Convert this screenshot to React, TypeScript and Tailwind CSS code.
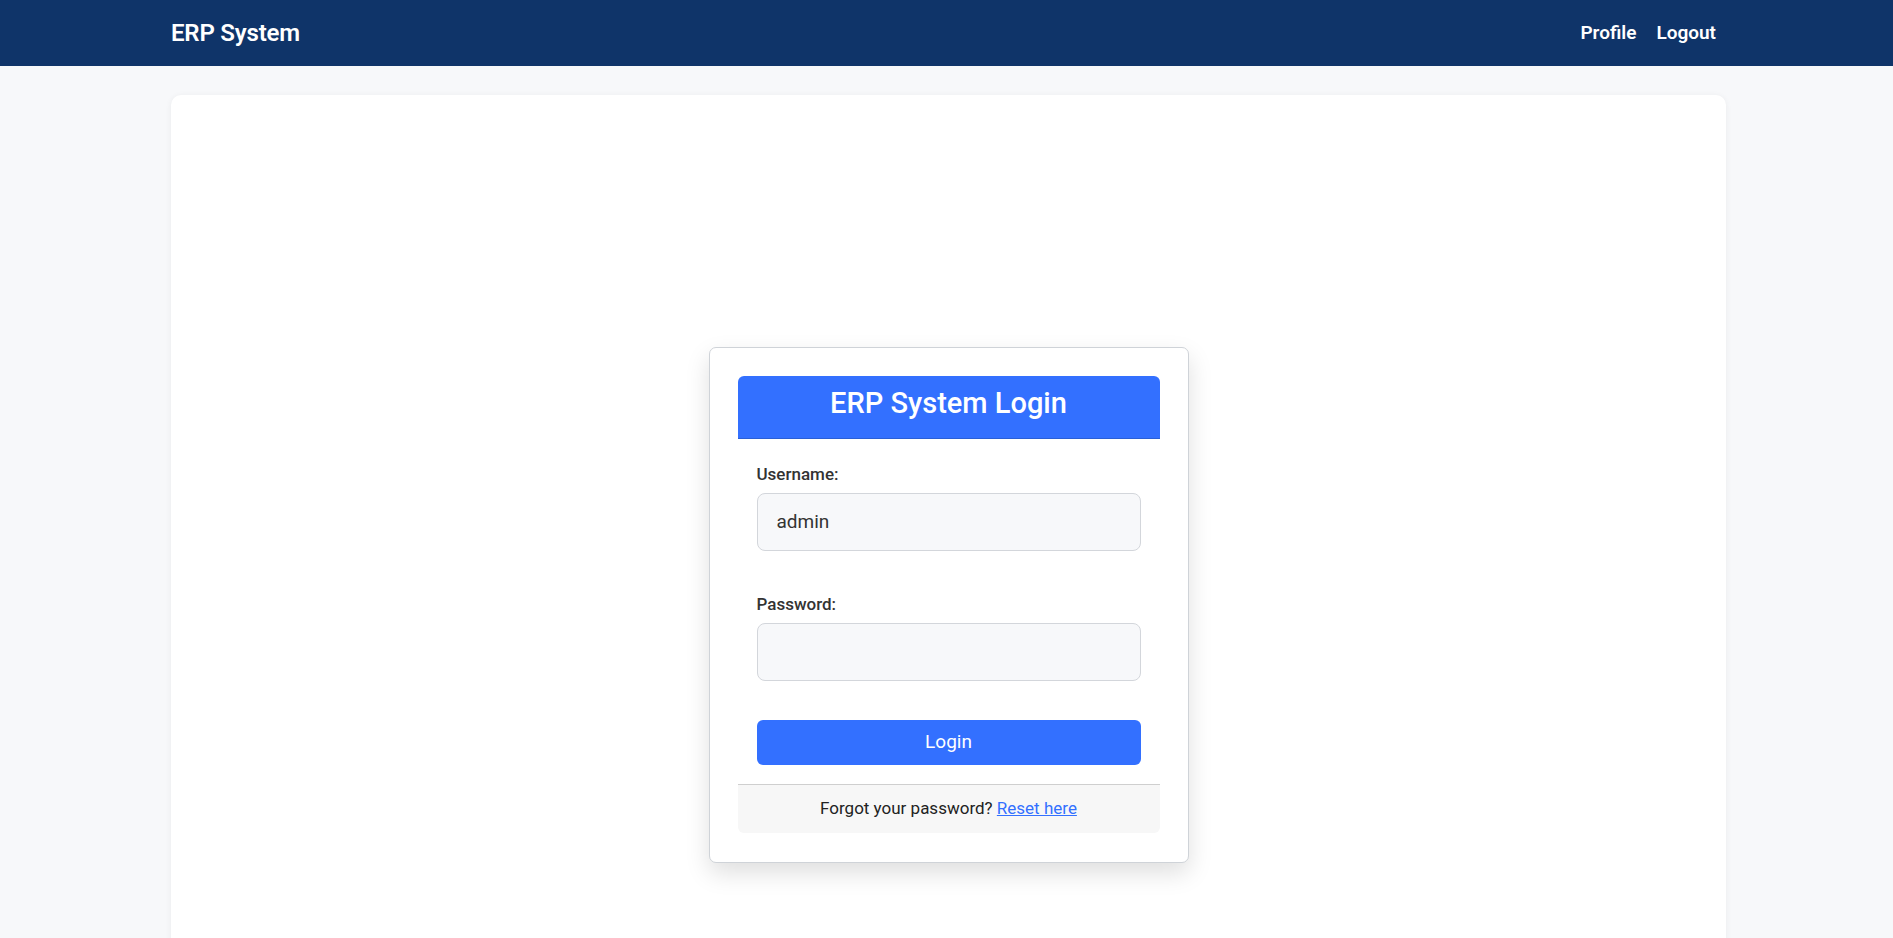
import { useState } from "react";

const NavBar = () => {
    return (
        <header className="bg-[#0f3469] h-[66px]">
            <div className="ml-[171px] w-[1555px] h-full flex items-center justify-between pr-[10px]">
                <span className="text-white text-[24px] font-semibold tracking-[-0.2px]">ERP System</span>
                <nav className="flex items-center gap-[20px] text-white text-[19px] font-semibold">
                    <a href="#">Profile</a>
                    <a href="#">Logout</a>
                </nav>
            </div>
        </header>
    );
};

const LoginBox = () => {
    const [username, setUsername] = useState("admin");
    const [password, setPassword] = useState("");

    return (
        <div className="w-[480px] bg-white border border-[#cfd3d8] rounded-[7px] shadow-[0_10px_24px_rgba(0,0,0,0.13)] p-[28px] pb-[29px]">
            <div className="h-[63px] bg-[#3370ff] border-b border-[#2a5fd6] rounded-t-[6px] flex items-center justify-center">
                <h1 className="text-white text-[29px] font-medium leading-none mb-[7px]">ERP System Login</h1>
            </div>
            <form className="px-[19px] pt-[23px]" onSubmit={(e) => e.preventDefault()}>
                <label className="block text-[17px] leading-[24px] font-medium text-[#333]">Username:</label>
                <input
                    className="mt-[7px] block w-full h-[58px] bg-[#f7f8fa] border border-[#d3d6db] rounded-[8px] px-[19px] text-[19px] text-[#333] outline-none"
                    value={username}
                    onChange={(e) => setUsername(e.target.value)}
                />
                <label className="mt-[41px] block text-[17px] leading-[24px] font-medium text-[#333]">Password:</label>
                <input
                    type="password"
                    className="mt-[7px] block w-full h-[58px] bg-[#f7f8fa] border border-[#d3d6db] rounded-[8px] px-[19px] text-[19px] text-[#333] outline-none"
                    value={password}
                    onChange={(e) => setPassword(e.target.value)}
                />
                <button
                    type="submit"
                    className="mt-[39px] block w-full h-[45px] bg-[#3370ff] rounded-[6px] text-white text-[19px]"
                >
                    Login
                </button>
            </form>
            <div className="mt-[19px] h-[49px] bg-[#f7f7f7] border-t border-[#cfcfcf] rounded-b-[6px] flex items-center justify-center text-[17px] text-[#222]">
                <span>
                    Forgot your password?{" "}
                    <a href="#" className="text-[#3370ff] underline">
                        Reset here
                    </a>
                </span>
            </div>
        </div>
    );
};

export default function App() {
    return (
        <div className="min-h-screen bg-[#f7f8fa] font-['Roboto',sans-serif]">
            <NavBar />
            <main className="ml-[171px] w-[1555px] mt-[29px] bg-white rounded-[10px] shadow-[0_1px_6px_rgba(0,0,0,0.06)] h-[1019px] flex items-center justify-center">
                <LoginBox />
            </main>
        </div>
    );
}
